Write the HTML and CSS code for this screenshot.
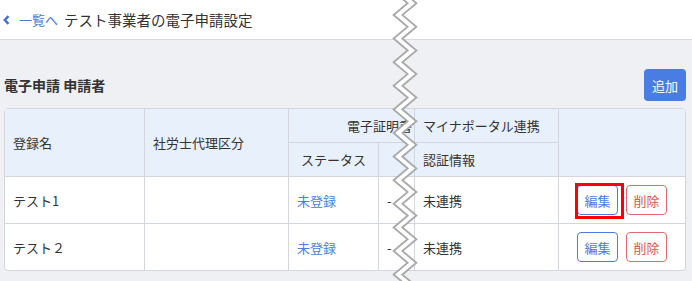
FILE: index.html
```html
<!DOCTYPE html>
<html lang="ja">
<head>
    <meta charset="UTF-8">
    <meta name="viewport" content="width=device-width, initial-scale=1.0">
    <title>電子申請設定</title>
    <link rel="stylesheet" href="styles.css">
</head>
<body>

    <header class="top-bar">
        <a class="back-link" href="#">
            <svg class="back-icon" width="7" height="10" viewBox="0 0 7 10">
                <path d="M5.5 1.2 L1.8 5 L5.5 8.8" fill="none" stroke="#3f6fd6" stroke-width="2.4"/>
            </svg>
            一覧へ
        </a>
        <h1 class="page-title">テスト事業者の電子申請設定</h1>
    </header>

    <main class="content">
        <div class="section-head">
            <h2>電子申請 申請者</h2>
            <button class="btn-add">追加</button>
        </div>

        <table class="applicant-table">
            <colgroup>
                <col style="width: 139px">
                <col style="width: 144px">
                <col style="width: 90px">
                <col style="width: 36px">
                <col style="width: 144px">
                <col style="width: 127px">
            </colgroup>
            <thead>
                <tr class="head-top">
                    <th rowspan="2" class="first">登録名</th>
                    <th rowspan="2">社労士代理区分</th>
                    <th colspan="2" class="cert-head">電子証明書</th>
                    <th>マイナポータル連携</th>
                    <th rowspan="2"></th>
                </tr>
                <tr>
                    <th class="center">ステータス</th>
                    <th></th>
                    <th>認証情報</th>
                </tr>
            </thead>
            <tbody>
                <tr>
                    <td class="first">テスト1</td>
                    <td></td>
                    <td><a class="status-link" href="#">未登録</a></td>
                    <td>-</td>
                    <td>未連携</td>
                    <td>
                        <div class="actions">
                            <button class="btn-edit">編集<span class="marker"></span></button>
                            <button class="btn-delete">削除</button>
                        </div>
                    </td>
                </tr>
                <tr>
                    <td class="first">テスト２</td>
                    <td></td>
                    <td><a class="status-link" href="#">未登録</a></td>
                    <td>-</td>
                    <td>未連携</td>
                    <td>
                        <div class="actions">
                            <button class="btn-edit">編集</button>
                            <button class="btn-delete">削除</button>
                        </div>
                    </td>
                </tr>
            </tbody>
        </table>
    </main>

    <!-- torn edge: the screenshot was cut here -->
    <svg class="tear" width="32" height="281" viewBox="0 0 32 281">
        <polyline class="tear-edge" points="10,-8.6 24,3.2 10,15 24,26.8 10,38.6 24,50.4 10,62.2 24,74 10,85.8 24,97.6 10,109.4 24,121.2 10,133 24,144.8 10,156.6 24,168.4 10,180.2 24,192 10,203.8 24,215.6 10,227.4 24,239.2 10,251 24,262.8 10,274.6 24,286.4"/>
        <polyline class="tear-fill" points="10,-8.6 24,3.2 10,15 24,26.8 10,38.6 24,50.4 10,62.2 24,74 10,85.8 24,97.6 10,109.4 24,121.2 10,133 24,144.8 10,156.6 24,168.4 10,180.2 24,192 10,203.8 24,215.6 10,227.4 24,239.2 10,251 24,262.8 10,274.6 24,286.4"/>
    </svg>

</body>
</html>
```

FILE: styles.css
```css
body {
    margin: 0;
    height: 281px;
    overflow: hidden;
    position: relative;
    background: #eff0f4;
    font-family: "Noto Sans CJK JP", "Noto Sans", sans-serif;
    font-size: 13px;
    color: #333;
}

.top-bar {
    height: 39px;
    background: #fff;
    border-bottom: 1px solid #d9d9de;
    display: flex;
    align-items: center;
    padding-left: 3px;
}

.back-link {
    display: flex;
    align-items: center;
    gap: 9px;
    color: #4a78d8;
    text-decoration: none;
    font-size: 13px;
    margin-right: 6px;
}

.page-title {
    margin: 0;
    font-size: 14.5px;
    font-weight: normal;
    color: #333;
}

.content {
    padding: 29px 6px 0 4px;
}

.section-head {
    display: flex;
    justify-content: space-between;
    align-items: center;
    margin-bottom: 7px;
}

.section-head h2 {
    margin: 0;
    font-size: 14px;
    font-weight: bold;
    color: #333;
}

.btn-add {
    width: 42px;
    height: 32px;
    padding: 0;
    border: none;
    border-radius: 4px;
    background: #4a7de3;
    color: #fff;
    font-family: inherit;
    font-size: 13px;
}

.applicant-table {
    width: 100%;
    table-layout: fixed;
    border-collapse: separate;
    border-spacing: 0;
    border: 1px solid #d3d6dc;
    border-radius: 4px;
    background: #fff;
}

th, td {
    padding: 8px;
    line-height: 17px;
    text-align: left;
    vertical-align: middle;
    border-left: 1px solid #d3d6dc;
    border-top: 1px solid #d3d6dc;
    white-space: nowrap;
    overflow: hidden;
}

th {
    background: #e8f0fb;
    font-weight: normal;
    color: #333;
}

.head-top th {
    border-top: none;
}

th.first, td.first {
    border-left: none;
}

th.center {
    text-align: center;
}

th.cert-head {
    text-align: right;
    padding-right: 2px;
}

.status-link {
    color: #4a7de3;
    text-decoration: none;
}

.actions {
    display: flex;
    justify-content: center;
    gap: 8px;
}

.btn-edit, .btn-delete {
    position: relative;
    height: 30px;
    padding: 0 6.5px;
    background: #fff;
    border: 1px solid;
    border-radius: 4px;
    font-family: inherit;
    font-size: 13px;
}

.btn-edit {
    color: #4a7de3;
    border-color: #4a7de3;
}

.btn-delete {
    color: #e5534b;
    border-color: #e36a6a;
}

.marker {
    position: absolute;
    left: -3px;
    top: -3px;
    width: 49px;
    height: 36px;
    border: 3px solid #f00;
    box-sizing: border-box;
}

.tear {
    position: absolute;
    top: 0;
    left: 388px;
}

.tear-edge {
    fill: none;
    stroke: #a9a9a9;
    stroke-width: 7.5;
}

.tear-fill {
    fill: none;
    stroke: #fff;
    stroke-width: 3.8;
}
```
